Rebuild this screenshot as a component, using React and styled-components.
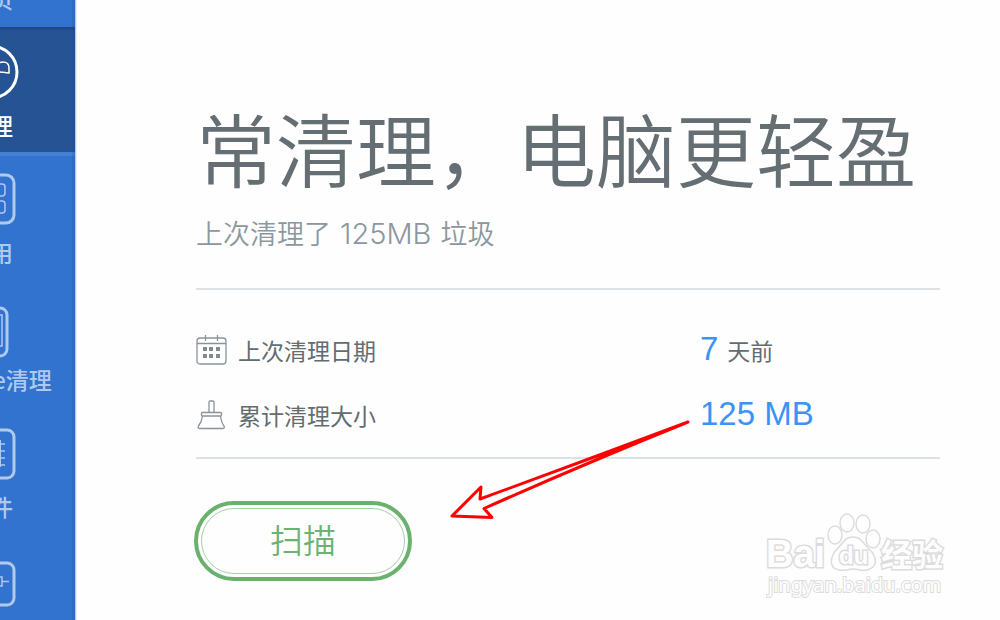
import React, { useState } from "react";
import styled, { createGlobalStyle } from "styled-components";

const GlobalStyle = createGlobalStyle`
  * {
    box-sizing: border-box;
  }

  body {
    margin: 0;
    background-color: #fefefe;
    font-family: "Noto Sans CJK SC", sans-serif;
  }
`;

const Page = styled.div`
  position: relative;
  display: flex;
  height: 100vh;
  overflow: hidden;
`;

const Sidebar = styled.aside`
  position: relative;
  z-index: 1;
  flex: none;
  display: flex;
  justify-content: flex-end;
  width: 76px;
  overflow: hidden;
  border-right: 1px solid #b3cbee;
  background-color: #3173ce;

  &::after {
    content: "";
    position: absolute;
    top: 0;
    right: 0;
    bottom: 0;
    width: 3px;
    background-color: rgba(30, 70, 160, 0.2);
  }
`;

const Nav = styled.nav`
  flex: none;
  width: 170px;
  margin-top: -100px;
`;

const NavButton = styled.button`
  display: flex;
  flex-direction: column;
  align-items: center;
  gap: 14px;
  width: 100%;
  height: 127px;
  padding: 18px 0 0;
  border: none;
  background-color: ${({ $active }) => ($active ? "#255394" : "transparent")};
  box-shadow: ${({ $active }) =>
    $active ? "inset 0 3px 2px -1px #1d4780, inset 0 -2px 0 #4480d6, 0 2px 0 #4480d6" : "none"};
  color: ${({ $active }) => ($active ? "#fff" : "#b0c9ee")};
  font-family: inherit;
  font-size: 23px;
  font-weight: 500;
  line-height: 24px;
  cursor: pointer;

  svg {
    flex: none;
    overflow: visible;
  }
`;

const Main = styled.main`
  flex: 1;
  padding: 96px 60px 0 119px;
  border-left: 1px solid #e9eef9;
`;

const Title = styled.h1`
  margin: 0;
  color: #646e73;
  font-size: 80px;
  font-weight: 350;
  line-height: 100px;
  white-space: nowrap;
`;

const Subtitle = styled.p`
  margin: 17px 0 34px;
  color: #8b989f;
  font-size: 27px;
  font-weight: 350;
  line-height: 40px;
`;

const Amount = styled.span`
  margin: 0 3px;
  font-family: Inter, "Liberation Sans", sans-serif;
  font-size: 29px;
  font-weight: 300;
`;

const Stats = styled.dl`
  margin: 0;
  padding: 27px 0 10px;
  border-top: 2px solid #dce1e4;
  border-bottom: 2px solid #dce1e4;
`;

const Row = styled.div`
  display: grid;
  grid-template-columns: 1fr 240px;
  align-items: center;
  height: 65px;
`;

const RowLabel = styled.dt`
  display: flex;
  align-items: center;
  gap: 11px;
  color: #626c71;
  font-size: 23px;
`;

const RowValue = styled.dd`
  margin: 0;
  padding-bottom: 2px;
  color: #626c71;
  font-size: 23px;
`;

const Figure = styled.strong`
  margin-right: 9px;
  color: #3d92f7;
  font-family: "Liberation Sans", sans-serif;
  font-size: 33px;
  font-weight: 400;
`;

const ScanButton = styled.button`
  width: 218px;
  height: 80px;
  margin: 42px 0 0 -2px;
  padding: 3px;
  border: 4px solid #69b16d;
  border-radius: 40px;
  background-color: #fefefe;
  color: #6cb271;
  font-family: inherit;
  font-size: 33px;
  font-weight: 350;
  cursor: pointer;
`;

const ScanText = styled.span`
  display: flex;
  align-items: center;
  justify-content: center;
  height: 100%;
  padding-bottom: 4px;
  border: 1px solid #a5d0a8;
  border-radius: 33px;
`;

const Arrow = styled.svg`
  position: absolute;
  top: 412px;
  left: 442px;
  pointer-events: none;
`;

const Watermark = styled.svg`
  position: absolute;
  right: 50px;
  bottom: 14px;
  pointer-events: none;

  text {
    paint-order: stroke;
  }
`;

const icons = {
  home: <path d="M4 26 27 6l23 20v24H4z" />,
  clean: (
    <>
      <circle cx="28" cy="27" r="26" />
      <path d="M18 27c6-2 11-1 28 1v-5c0-4-2-6-6-6-3 0-5 1-8 3-6 2-12 1-14 2z" strokeWidth="1.5" />
    </>
  ),
  apps: (
    <>
      <rect x="3" y="3" width="48" height="48" rx="8" />
      <g strokeWidth="1.5">
        <rect x="13" y="12" width="11" height="12" rx="3" />
        <rect x="31" y="12" width="11" height="12" rx="3" />
        <rect x="13" y="29" width="11" height="12" rx="3" />
        <rect x="31" y="29" width="11" height="12" rx="3" />
      </g>
    </>
  ),
  phone: (
    <>
      <rect x="11" y="9" width="33" height="48" rx="7" />
      <rect x="17" y="16" width="22" height="31" strokeWidth="1.5" />
    </>
  ),
  files: (
    <>
      <rect x="3" y="4" width="48" height="48" rx="7" />
      <path d="M37 14v27" strokeWidth="2" />
      <path d="M32 18h10M32 25h10M32 32h10M32 39h10" strokeWidth="1.5" />
    </>
  ),
  tools: (
    <>
      <rect x="3" y="10" width="48" height="42" rx="7" />
      <path d="M26 24h13v9H26zM39 28.5h7" strokeWidth="1.5" />
    </>
  ),
};

const navItems = [
  { id: "home", label: "首页" },
  { id: "clean", label: "清理" },
  { id: "apps", label: "应用" },
  { id: "phone", label: "iPhone清理" },
  { id: "files", label: "文件" },
  { id: "tools", label: "工具" },
];

function CalendarIcon() {
  return (
    <svg width="31" height="30" fill="none" stroke="#899499" strokeWidth="1.3">
      <rect x="1" y="3" width="29" height="26" rx="3" />
      <path d="M1 8.5h29M9.500 0v6M21.500 0v6" />
      <g fill="#818c91" stroke="none">
        {[7, 13, 20].map((x) => (
          <React.Fragment key={x}>
            <rect x={x} y="12" width="4" height="4" />
            <rect x={x} y="19" width="4" height="4" />
          </React.Fragment>
        ))}
      </g>
    </svg>
  );
}

function BrushIcon() {
  return (
    <svg width="31" height="30" fill="none" stroke="#899499" strokeWidth="1.3">
      <path d="M13 12.500V2q0-1 1-1h3q1 0 1 1v10.500" />
      <rect x="5.500" y="12.500" width="20" height="3.500" rx="1" />
      <path d="M6.500 16 C6 20 4.500 23.500 2.500 26q-1 2.500 1 2.500h23.500q2 0 1-2.500c-2-2.500-3-6-3.500-10" />
    </svg>
  );
}

function App() {
  const [active, setActive] = useState("clean");

  return (
    <Page>
      <GlobalStyle />
      <Sidebar>
        <Nav>
          {navItems.map(({ id, label }) => (
            <NavButton key={id} type="button" $active={id === active} onClick={() => setActive(id)}>
              <svg width="54" height="54" fill="none" stroke="currentColor" strokeWidth="3">
                {icons[id]}
              </svg>
              {label}
            </NavButton>
          ))}
        </Nav>
      </Sidebar>
      <Main>
        <Title>常清理，电脑更轻盈</Title>
        <Subtitle>
          上次清理了 <Amount>125MB</Amount> 垃圾
        </Subtitle>
        <Stats>
          <Row>
            <RowLabel>
              <CalendarIcon />
              上次清理日期
            </RowLabel>
            <RowValue>
              <Figure>7</Figure>天前
            </RowValue>
          </Row>
          <Row>
            <RowLabel>
              <BrushIcon />
              累计清理大小
            </RowLabel>
            <RowValue>
              <Figure>125 MB</Figure>
            </RowValue>
          </Row>
        </Stats>
        <ScanButton type="button">
          <ScanText>扫描</ScanText>
        </ScanButton>
      </Main>
      <Arrow width="252" height="112" fill="none" stroke="#f00" strokeWidth="3">
        <path
          d="M246 10 Q142 49 38 87l1-12-29 29 40 1.500-8-9Q142 52 246 10z"
          strokeLinejoin="round"
        />
      </Arrow>
      <Watermark width="184" height="96" fill="#fefefe" stroke="#dcdcdc" strokeWidth="1.5">
        <g fontFamily="Liberation Sans, sans-serif" fontWeight="700" strokeWidth="3">
          <text x="0" y="57" fontSize="38">
            Bai
          </text>
          <g strokeWidth="1.5">
            <ellipse cx="69" cy="25" rx="7" ry="9" />
            <ellipse cx="81" cy="13" rx="7" ry="9" />
            <ellipse cx="97" cy="14" rx="7" ry="9" />
            <ellipse cx="107" cy="29" rx="7" ry="9" />
            <path d="M87 27c8 0 10 6 15 11 9 8 11 19-1 22-5 1-9-1-14-1s-9 2-14 1c-11-2-9-14-1-22 5-5 7-11 15-11z" />
          </g>
          <text x="73" y="54" fontSize="24">
            du
          </text>
        </g>
        <text
          x="115"
          y="56"
          fontFamily="Noto Sans CJK SC, sans-serif"
          fontSize="31"
          fontWeight="700"
          strokeWidth="3"
        >
          经验
        </text>
        <text x="2" y="82" fontFamily="Noto Sans, sans-serif" fontSize="20" strokeWidth="2">
          jingyan.baidu.com
        </text>
      </Watermark>
    </Page>
  );
}

export default App;
